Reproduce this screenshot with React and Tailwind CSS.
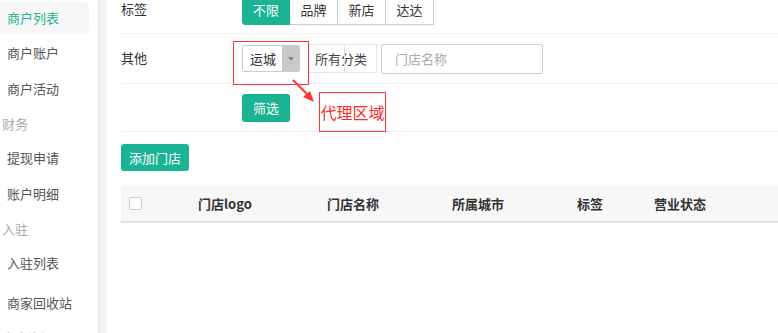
import React from 'react';

const menu = [
  { type: 'item', label: '商户列表', active: true },
  { type: 'item', label: '商户账户' },
  { type: 'item', label: '商户活动' },
  { type: 'head', label: '财务' },
  { type: 'item', label: '提现申请' },
  { type: 'item', label: '账户明细' },
  { type: 'head', label: '入驻' },
  { type: 'item', label: '入驻列表' },
  { type: 'item', label: '商家回收站', gap: true },
  { type: 'head', label: '商户资源' },
];

const tags = ['不限', '品牌', '新店', '达达'];

const columns = [
  { label: '门店logo', w: 'w-[129px]' },
  { label: '门店名称', w: 'w-[125px]' },
  { label: '所属城市', w: 'w-[125px]' },
  { label: '标签', w: 'w-[77px]' },
  { label: '营业状态', w: 'w-[100px]' },
];

function Sidebar() {
  return (
    <div className="w-[98px] shrink-0 bg-white pt-[2px]">
      {menu.map((m) => {
        if (m.type === 'head') {
          return (
            <div key={m.label} className="h-[33px] flex items-center pl-[2px] text-[#aaa]">
              {m.label}
            </div>
          );
        }
        if (m.active) {
          return (
            <div
              key={m.label}
              className="w-[89px] h-[32px] mb-[1px] flex items-center pl-[7px] rounded-r bg-[#f7f7f7] text-[#1ab394]"
            >
              {m.label}
            </div>
          );
        }
        return (
          <div
            key={m.label}
            className={`w-[89px] h-[36px] flex items-center pl-[7px] text-[#555] ${m.gap ? 'mt-[4px]' : ''}`}
          >
            {m.label}
          </div>
        );
      })}
    </div>
  );
}

export default function App() {
  return (
    <div
      className="w-[778px] h-[333px] overflow-hidden flex bg-white text-[13px] text-[#333]"
      style={{ fontFamily: '"Microsoft YaHei", "Noto Sans CJK SC", sans-serif' }}
    >
      <Sidebar />
      {/* divider */}
      <div className="w-[9px] shrink-0 bg-[#f3f3f3] border-l-2 border-[#e9e9e9]" />

      <div className="relative flex-1 pl-[14px]">
        {/* filter rows */}
        <div className="mt-[-16px]">
          <div className="h-[50px] flex items-center border-b border-[#eef3f3]">
            <div className="w-[121px]">标签</div>
            <div className="flex pt-[2px]">
              {tags.map((t, i) => (
                <div
                  key={t}
                  className={`h-[30px] w-[48px] flex items-center justify-center border ${
                    i === 0
                      ? 'bg-[#1ab394] border-[#1ab394] text-white rounded-l-[3px]'
                      : 'bg-white border-[#ccc] border-l-0 text-[#333]'
                  }`}
                >
                  {t}
                </div>
              ))}
            </div>
          </div>

          <div className="h-[50px] flex items-center border-b border-[#eef3f3]">
            <div className="w-[121px] pb-[2px]">其他</div>
            <div className="flex items-center">
              <div className="h-[27px] w-[58px] flex border border-[#ccc] rounded-[2px] bg-white">
                <div className="flex-1 flex items-center pl-[7px]">运城</div>
                <div className="w-[17px] bg-[#c8c8c8] flex items-center justify-center">
                  <span className="block w-0 h-0 border-l-[3px] border-r-[3px] border-t-[4px] border-l-transparent border-r-transparent border-t-[#888]" />
                </div>
              </div>
              <div className="ml-[7px] h-[29px] w-[70px] flex items-center relative border border-[#e6e6e6] border-l-0 bg-white">
                <span className="pl-[8px] text-[#444]">所有分类</span>
                <span className="absolute left-[37px] top-0 bottom-0 border-l border-[#e0e0e0]" />
              </div>
              <div className="ml-[4px] h-[30px] w-[162px] flex items-center pl-[13px] border border-[#ccc] rounded-[2px] text-[#aaa]">
                门店名称
              </div>
            </div>
          </div>

          <div className="h-[48px] flex items-center border-b border-[#eef3f3]">
            <div className="w-[121px]" />
            <div className="h-[28px] w-[48px] flex items-center justify-center bg-[#1ab394] text-white rounded-[3px]">
              筛选
            </div>
          </div>
        </div>

        <div className="mt-[12px] h-[27px] w-[68px] flex items-center justify-center bg-[#1ab394] text-white rounded-[3px]">
          添加门店
        </div>

        {/* table header */}
        <div className="mt-[15px] h-[37px] flex items-center bg-[#f7f7f7] border-b-2 border-[#e3e3e3] font-bold text-[#333]">
          <div className="w-[77px] pl-[8px] flex items-center">
            <span className="block w-[13px] h-[13px] border border-[#ccc] bg-white rounded-[2px]" />
          </div>
          {columns.map((c) => (
            <div key={c.label} className={`${c.w} shrink-0`}>
              {c.label}
            </div>
          ))}
        </div>

        {/* annotations */}
        <div className="absolute left-[126px] top-[41px] w-[76px] h-[44px] border border-[#ff3333]" />
        <svg className="absolute left-[180px] top-[74px]" width="36" height="32" viewBox="0 0 36 32">
          <line x1="6" y1="6" x2="23" y2="23" stroke="#ff3333" strokeWidth="2" />
          <polygon points="27,28 16,23 23,17" fill="#ff3333" />
        </svg>
        <div className="absolute left-[212px] top-[92px] w-[67px] h-[40px] border border-[#ff3333] flex items-center justify-center text-[16px] text-[#ff2a2a]">
          代理区域
        </div>
      </div>
    </div>
  );
}
